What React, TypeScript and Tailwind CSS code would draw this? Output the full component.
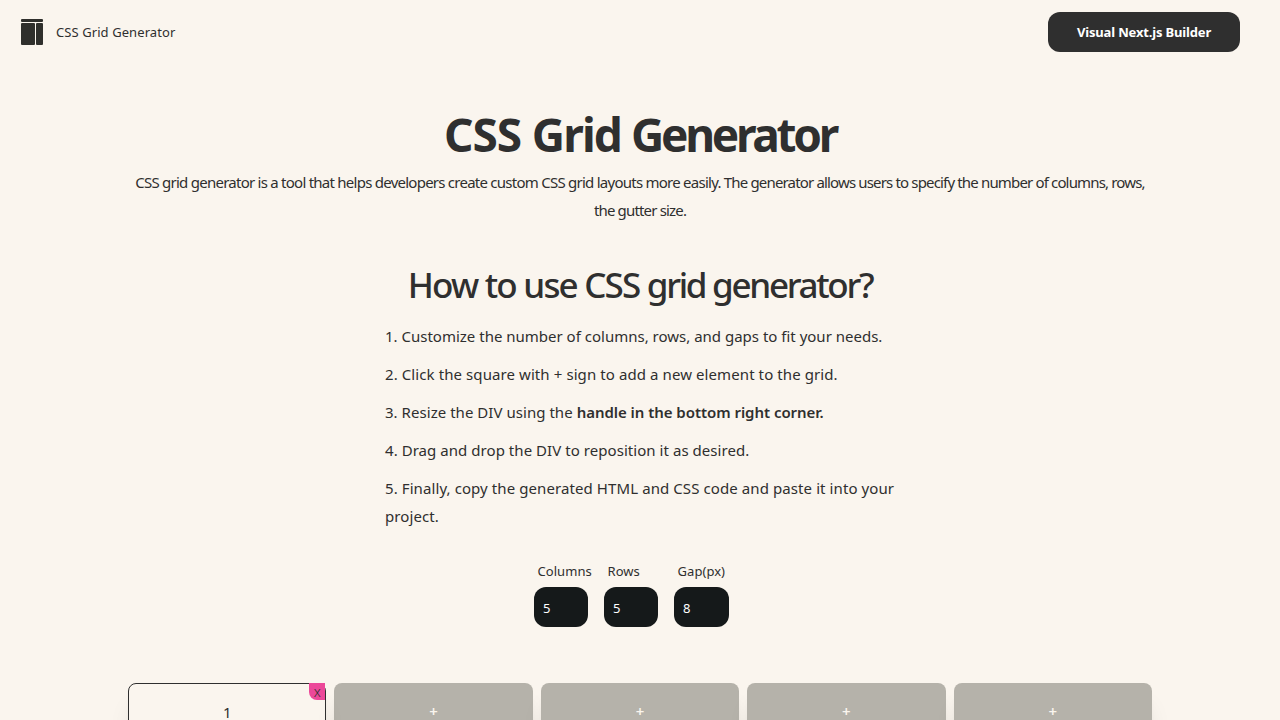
const steps = [
  { text: '1. Customize the number of columns, rows, and gaps to fit your needs.', tracking: 'tracking-[0px]' },
  { text: '2. Click the square with + sign to add a new element to the grid.', tracking: 'tracking-[0.09px]' },
  { text: '3. Resize the DIV using the ', strong: 'handle in the bottom right corner.', tracking: 'tracking-[0.04px]' },
  { text: '4. Drag and drop the DIV to reposition it as desired.', tracking: 'tracking-[0.05px]' },
  { text: '5. Finally, copy the generated HTML and CSS code and paste it into your project.', tracking: 'tracking-[0.09px]' },
];

const fields = [
  { label: 'Columns', value: '5', width: 'w-[54px]' },
  { label: 'Rows', value: '5', width: 'w-[54px]' },
  { label: 'Gap(px)', value: '8', width: 'w-[55px]' },
];

function Logo() {
  return (
    <svg width="22" height="26" viewBox="0 0 22 26" fill="#2f2f2c" aria-hidden="true">
      <rect x="0" y="0" width="22" height="3" rx="1" />
      <rect x="0" y="4" width="14" height="22" rx="1" />
      <rect x="15" y="4" width="7" height="22" rx="1" />
    </svg>
  );
}

export default function App() {
  return (
    <div className="h-screen overflow-hidden bg-[#faf5ee] font-['Noto_Sans','Open_Sans',sans-serif] text-[#2f2f2f]">
      <header className="flex h-16 items-center justify-between pr-10 pl-[21px]">
        <div className="flex items-center gap-[13px]">
          <Logo />
          <span className="text-[13px] leading-5 tracking-[0.08px]">CSS Grid Generator</span>
        </div>
        <button className="h-10 w-48 rounded-xl bg-[#2f2f2f] pt-px text-[13px] font-bold tracking-[-0.16px] text-white">
          Visual Next.js Builder
        </button>
      </header>
      <main className="px-32">
        <h1 className="mt-[46px] text-center text-[46px] leading-[48px] font-bold">
          <span className="tracking-[-1.1px]">CSS </span>
          <span className="tracking-[-1.9px]">Grid </span>
          <span className="tracking-[-3.3px]">Generator</span>
        </h1>
        <p className="mt-[10px] text-center text-[15px] leading-7">
          <span className="tracking-[-0.75px]">CSS grid generator is a tool that helps developers create custom CSS grid layouts more easily. </span>
          <span className="tracking-[-0.84px]">The generator allows users to specify the number of columns, rows,</span>
          <br />
          <span className="tracking-[-0.83px]">the gutter size.</span>
        </p>
        <h2 className="mt-[41px] text-center text-[35px] leading-10 font-medium tracking-[-1.8px]">
          How to use CSS <span className="tracking-[-2.3px]">grid generator?</span>
        </h2>
        <div className="mx-auto mt-[17px] flex w-[512px] flex-col gap-[10px] pl-px text-[15px] leading-7">
          {steps.map((s) => (
            <p key={s.text} className={s.tracking}>
              {s.text}
              {s.strong && <strong className="font-semibold tracking-[-0.04px]">{s.strong}</strong>}
            </p>
          ))}
        </div>
        <div className="mt-[31px] ml-[406px] flex gap-4">
          {fields.map((f) => (
            <label key={f.label} className={`${f.width} flex flex-col gap-1.5 text-[13px] leading-5 whitespace-nowrap`}>
              <span className="pl-[3.5px] tracking-[0.06px]">{f.label}</span>
              <input className="h-10 w-full rounded-xl bg-[#15191a] px-[9px] pt-px text-[13px] text-white outline-none" defaultValue={f.value} />
            </label>
          ))}
        </div>
        <div className="mt-14 grid grid-cols-5 gap-2">
          <div className="relative h-[100px] rounded-lg border border-[#2f2f2f] pt-[17px] text-center text-[15px] leading-[22px] shadow-xl">
            1
            <span className="absolute -top-px right-0 h-[17px] w-4 rounded-bl-lg bg-[#ec4899] text-center text-[14px] leading-[17px] font-light">x</span>
          </div>
          {[2, 3, 4, 5].map((n) => (
            <div key={n} className="h-[100px] rounded-lg bg-[#b5b2aa] pt-[17px] text-center text-[15px] leading-[22px] font-semibold text-[#faf5ee] shadow-xl">
              +
            </div>
          ))}
        </div>
      </main>
    </div>
  );
}
